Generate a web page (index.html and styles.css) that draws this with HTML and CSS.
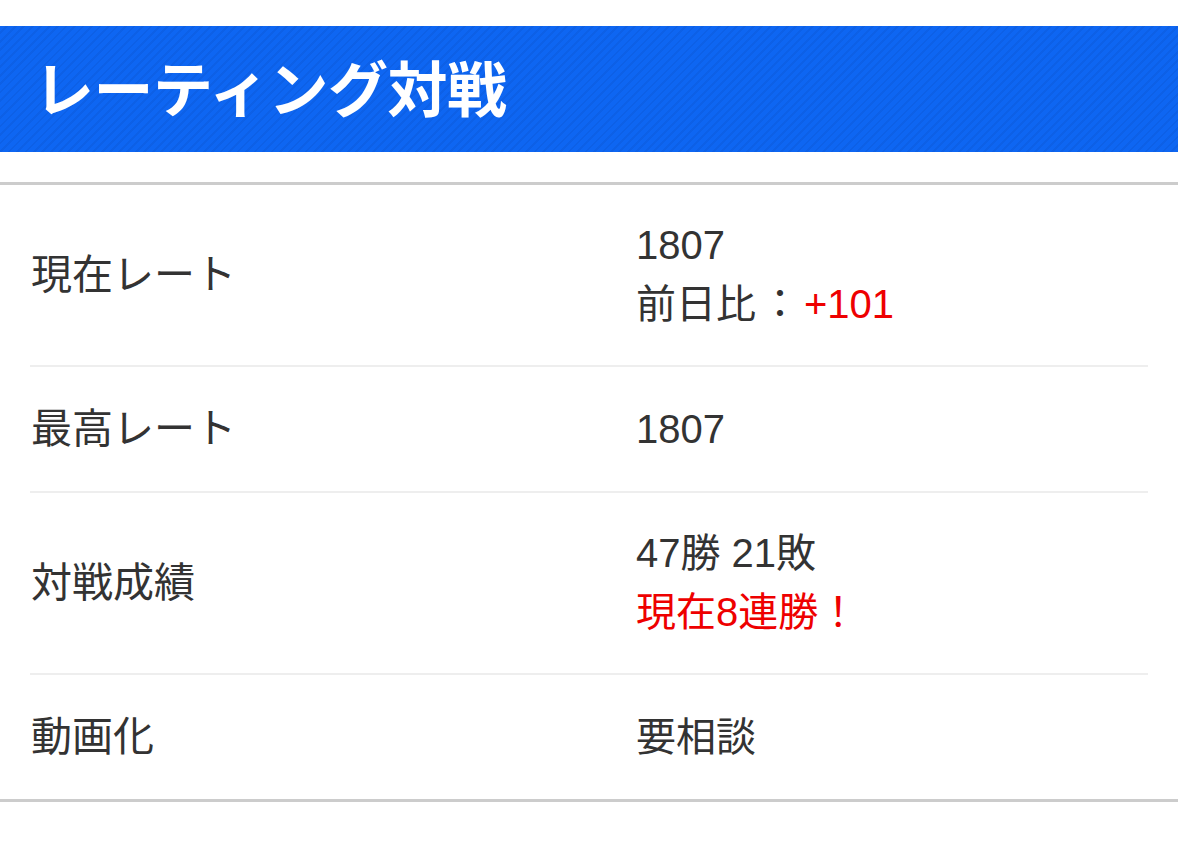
FILE: index.html
```html
<!DOCTYPE html>
<html lang="ja">
<head>
<meta charset="utf-8">
<link rel="stylesheet" href="styles.css">
</head>
<body>
<div class="page">
  <h1 class="banner">レーティング対戦</h1>
  <div class="table">
    <div class="row">
      <div class="label">現在レート</div>
      <div class="value multi">
        <div>1807</div>
        <div>前日比<span class="colon">：</span><span class="red">+101</span></div>
      </div>
    </div>
    <div class="row">
      <div class="label">最高レート</div>
      <div class="value"><div>1807</div></div>
    </div>
    <div class="row">
      <div class="label">対戦成績</div>
      <div class="value multi">
        <div>47勝 21敗</div>
        <div class="red">現在8連勝！</div>
      </div>
    </div>
    <div class="row">
      <div class="label">動画化</div>
      <div class="value"><div>要相談</div></div>
    </div>
  </div>
</div>
</body>
</html>
```
FILE: styles.css
```css
html, body {
  margin: 0;
  padding: 0;
  background: #ffffff;
}
body {
  font-family: "Liberation Sans", "Noto Sans CJK JP", sans-serif;
  color: #333333;
}
.page {
  padding-top: 26px;
}
.banner {
  margin: 0;
  height: 126px;
  box-sizing: border-box;
  display: flex;
  align-items: center;
  padding-left: 34px;
  padding-bottom: 8px;
  background-color: #0e66f2;
  background-image: repeating-linear-gradient(-45deg, rgba(0,0,0,0) 0px, rgba(0,0,0,0) 4px, rgba(0,20,80,0.07) 4px, rgba(0,20,80,0.07) 6px);
  color: #ffffff;
  font-family: "Noto Sans CJK JP", sans-serif;
  font-weight: 700;
  font-size: 60px;
  letter-spacing: -0.5px;
}
.table {
  margin-top: 30px;
  border-top: 3px solid #cccccc;
  border-bottom: 3px solid #cccccc;
  padding: 0 30px;
}
.row {
  display: grid;
  grid-template-columns: 606px 1fr;
  align-items: center;
  padding: 31px 0;
  border-bottom: 2px solid #eeeeee;
  font-size: 41px;
  line-height: 62px;
}
.row:last-child {
  border-bottom: none;
}
.label {
  padding-left: 1px;
}
.value {
  font-size: 40px;
}
.value.multi {
  line-height: 59px;
}
.colon {
  padding-left: 4px;
  padding-right: 4px;
}
.red {
  color: #ee0000;
}
```
